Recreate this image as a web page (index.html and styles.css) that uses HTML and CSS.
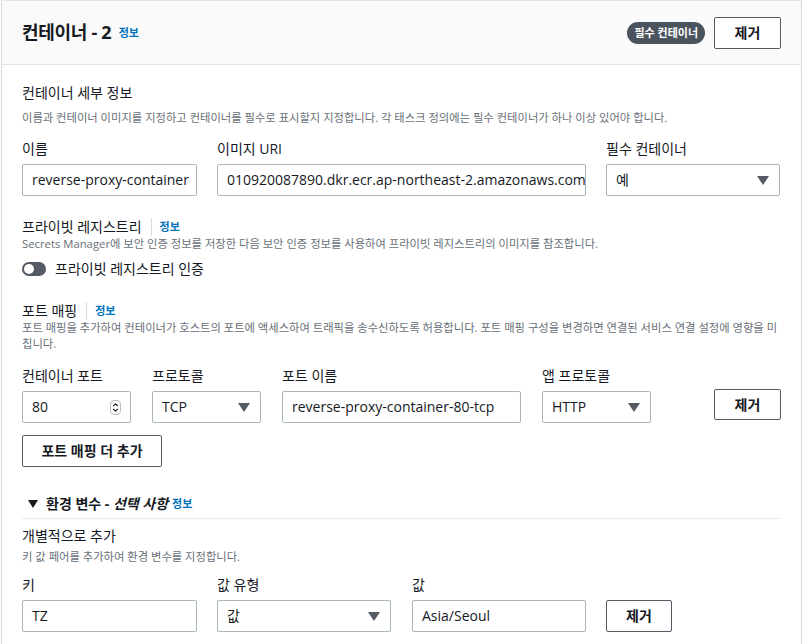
FILE: index.html
```html
<!DOCTYPE html>
<html lang="ko">
<head>
<meta charset="utf-8">
<link rel="stylesheet" href="styles.css">
</head>
<body>
<div class="panel">
  <div class="panel-header">
    <h2 class="title">컨테이너 - 2 <a class="info">정보</a></h2>
    <div class="header-actions">
      <span class="badge">필수 컨테이너</span>
      <button class="btn btn-top">제거</button>
    </div>
  </div>
  <div class="panel-body">
    <div class="section-title">컨테이너 세부 정보</div>
    <div class="desc">이름과 컨테이너 이미지를 지정하고 컨테이너를 필수로 표시할지 지정합니다. 각 태스크 정의에는 필수 컨테이너가 하나 이상 있어야 합니다.</div>

    <div class="row row-details">
      <div class="field w175">
        <label class="label">이름</label>
        <div class="input">reverse-proxy-container</div>
      </div>
      <div class="field w369">
        <label class="label">이미지 URI</label>
        <div class="input">010920087890.dkr.ecr.ap-northeast-2.amazonaws.com</div>
      </div>
      <div class="field w174">
        <label class="label">필수 컨테이너</label>
        <div class="input select">예<span class="caret"></span></div>
      </div>
    </div>

    <div class="sub-title">프라이빗 레지스트리<span class="sep"></span><a class="info">정보</a></div>
    <div class="desc">Secrets Manager에 보안 인증 정보를 저장한 다음 보안 인증 정보를 사용하여 프라이빗 레지스트리의 이미지를 참조합니다.</div>
    <div class="toggle-row"><span class="toggle"><span class="knob"></span></span>프라이빗 레지스트리 인증</div>

    <div class="sub-title port-title">포트 매핑<span class="sep"></span><a class="info">정보</a></div>
    <div class="desc">포트 매핑을 추가하여 컨테이너가 호스트의 포트에 액세스하여 트래픽을 송수신하도록 허용합니다. 포트 매핑 구성을 변경하면 연결된 서비스 연결 설정에 영향을 미칩니다.</div>

    <div class="row row-ports">
      <div class="field w109">
        <label class="label">컨테이너 포트</label>
        <div class="input number">80
          <svg class="stepper" width="11" height="15" viewBox="0 0 11 15"><rect x="0.5" y="0.5" width="10" height="14" rx="3.5" fill="#fff" stroke="#b8bcc2"/><path d="M3.2 6 L5.5 3.9 L7.8 6" fill="none" stroke="#16191f" stroke-width="1.1"/><path d="M3.2 9 L5.5 11.1 L7.8 9" fill="none" stroke="#16191f" stroke-width="1.1"/></svg>
        </div>
      </div>
      <div class="field w109">
        <label class="label">프로토콜</label>
        <div class="input select">TCP<span class="caret"></span></div>
      </div>
      <div class="field w239">
        <label class="label">포트 이름</label>
        <div class="input">reverse-proxy-container-80-tcp</div>
      </div>
      <div class="field w109">
        <label class="label">앱 프로토콜</label>
        <div class="input select">HTTP<span class="caret"></span></div>
      </div>
      <button class="btn btn-remove-port">제거</button>
    </div>

    <button class="btn btn-add">포트 매핑 더 추가</button>

    <div class="expander"><span class="exp-caret"></span>환경 변수 - <em>선택 사항</em> <a class="info">정보</a></div>

    <div class="section-title env-title">개별적으로 추가</div>
    <div class="desc">키 값 페어를 추가하여 환경 변수를 지정합니다.</div>

    <div class="row row-env">
      <div class="field w175">
        <label class="label">키</label>
        <div class="input">TZ</div>
      </div>
      <div class="field w174">
        <label class="label">값 유형</label>
        <div class="input select">값<span class="caret"></span></div>
      </div>
      <div class="field w174">
        <label class="label">값</label>
        <div class="input">Asia/Seoul</div>
      </div>
      <button class="btn btn-remove-env">제거</button>
    </div>
  </div>
</div>
</body>
</html>
```

FILE: styles.css
```css
* { box-sizing: border-box; }
html, body { margin: 0; padding: 0; background: #fff; }
body {
  font-family: "Open Sans", "Noto Sans CJK KR", sans-serif;
  color: #16191f;
  font-size: 14px;
}
.panel {
  margin-left: 1px;
  width: 801px;
  min-height: 660px;
  border: 1px solid #d5dbdb;
  border-top-color: #e3e6e6;
}
.panel-header {
  height: 64px;
  background: #fafafa;
  border-bottom: 1px solid #e3e6e6;
  display: flex;
  align-items: center;
  justify-content: space-between;
  padding: 0 20px 0 20px;
}
.title {
  margin: 0;
  font-size: 18px;
  font-weight: 700;
  line-height: 24px;
  letter-spacing: -0.3px;
}
.info {
  color: #0073bb;
  font-size: 11px;
  font-weight: 700;
  margin-left: 3px;
  vertical-align: 2px;
  letter-spacing: 0;
}
.header-actions { display: flex; align-items: center; gap: 9px; margin-top: 1px; }
.badge {
  background: #4b545e;
  color: #fff;
  font-size: 11px;
  font-weight: 700;
  line-height: 14px;
  padding: 4px 7px;
  border-radius: 12px;
}
.btn {
  font-family: "Open Sans", "Noto Sans CJK KR", sans-serif;
  background: #fff;
  border: 1px solid #545b64;
  border-radius: 2px;
  color: #16191f;
  font-size: 14px;
  font-weight: 700;
  height: 32px;
  padding: 0;
  line-height: 30px;
  cursor: pointer;
}
.btn-top { width: 67px; }
.panel-body { padding: 18px 20px 0 20px; }
.section-title { font-size: 14px; line-height: 20px; }
.desc {
  font-size: 11.3px;
  color: #687078;
  line-height: 16px;
  margin-top: 7px;
}
.row { display: flex; align-items: flex-end; }
.row-details { gap: 20px; margin-top: 13px; }
.row-ports { gap: 21px; margin-top: 14px; }
.row-env { gap: 20px; margin-top: 10px; }
.row-env .w174 + .w174 { margin-left: 1px; }
.field { display: flex; flex-direction: column; }
.w175 { width: 175px; }
.w174 { width: 174px; }
.w369 { width: 369px; }
.w109 { width: 109px; }
.w239 { width: 239px; }
.label { font-size: 14px; line-height: 20px; margin-bottom: 5px; }
.input {
  height: 32px;
  border: 1px solid #aab7b8;
  border-radius: 2px;
  padding: 0 9px;
  font-size: 14px;
  line-height: 30px;
  white-space: nowrap;
  overflow: hidden;
  position: relative;
  display: flex;
  align-items: center;
}
.select { justify-content: space-between; }
.caret {
  width: 0; height: 0;
  border-left: 6px solid transparent;
  border-right: 6px solid transparent;
  border-top: 9px solid #545b64;
  margin-right: 1px;
}
.number { justify-content: space-between; }
.sub-title {
  margin-top: 22px;
  font-size: 14px;
  line-height: 18px;
  display: flex;
  align-items: center;
}
.sub-title .info { vertical-align: 0; margin-left: 0; }
.sep {
  display: inline-block;
  width: 1px;
  height: 18px;
  background: #d5dbdb;
  margin: 0 8px 0 9px;
}
.sub-title + .desc { margin-top: 0; }
.toggle-row {
  display: flex;
  align-items: center;
  margin-top: 7px;
  line-height: 20px;
  font-size: 14px;
}
.toggle {
  width: 24px;
  height: 14px;
  border-radius: 8px;
  background: #545b64;
  margin-right: 9px;
  position: relative;
}
.knob {
  position: absolute;
  left: 2px;
  top: 2px;
  width: 10px;
  height: 10px;
  border-radius: 50%;
  background: #fff;
}
.port-title { margin-top: 23px; }
.btn-remove-port { width: 67px; height: 31px; margin-left: 42px; margin-bottom: 3px; }
.btn-add { margin-top: 12px; width: 140px; }
.expander {
  margin-top: 27px;
  font-size: 14px;
  font-weight: 700;
  line-height: 20px;
  padding-bottom: 4px;
  border-bottom: 1px solid #eaeded;
  padding-left: 6px;
  display: flex;
  align-items: center;
  white-space: pre;
}
.expander em { font-style: italic; }
.expander .info { margin-left: 4px; vertical-align: 0; }
.exp-caret {
  width: 0; height: 0;
  border-left: 5px solid transparent;
  border-right: 5px solid transparent;
  border-top: 8px solid #16191f;
  margin-right: 8px;
}
.env-title { margin-top: 7px; }
.env-title + .desc { margin-top: 3px; }
.btn-remove-env { width: 66px; margin-bottom: 0; }
```
